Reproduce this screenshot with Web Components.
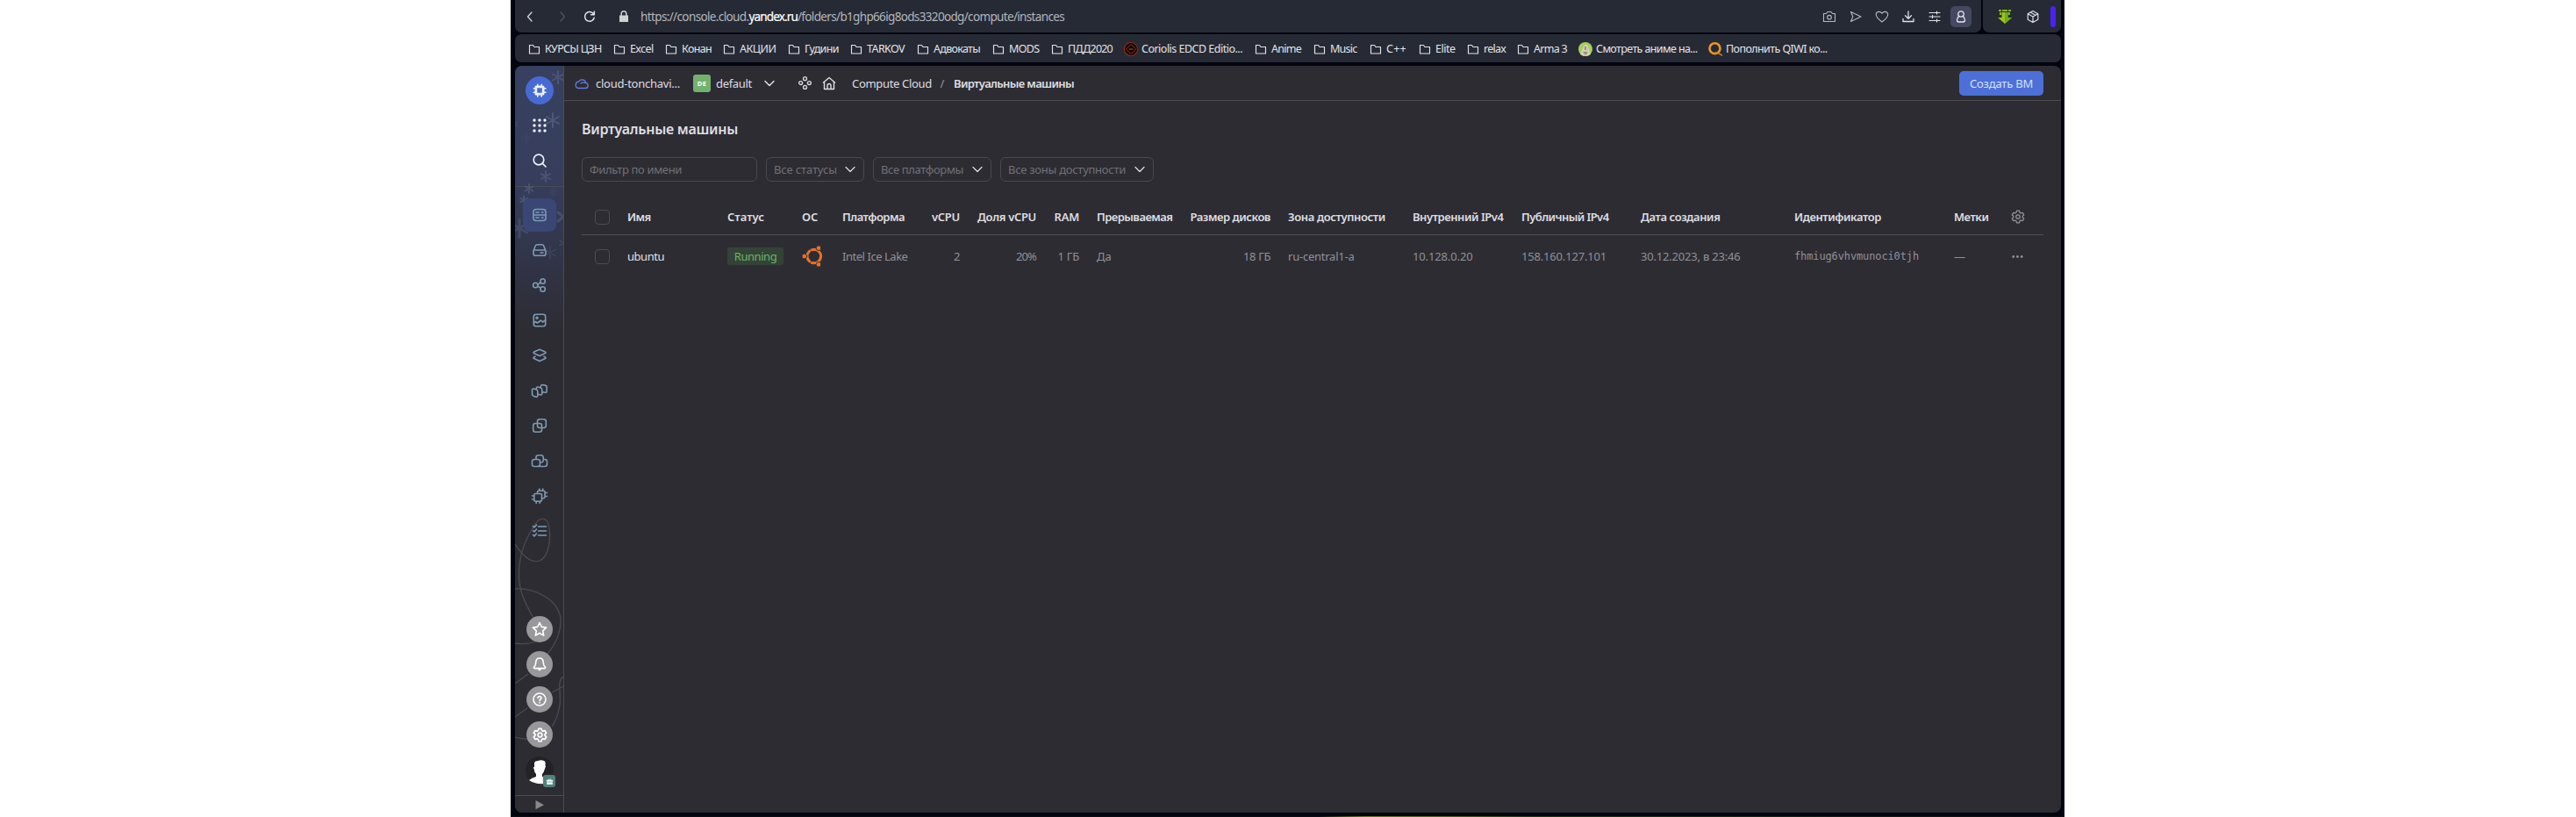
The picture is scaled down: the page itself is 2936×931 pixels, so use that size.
<!DOCTYPE html>
<html lang="ru">
<head>
<meta charset="utf-8">
<title>Compute Cloud</title>
<style>
html,body{margin:0;height:100%;background:#fff;overflow:hidden}
body{display:flex;padding-left:582px;box-sizing:border-box;font-family:"Noto Sans","Open Sans",sans-serif;font-size:13px;color:#dfdfe1}
</style>
</head>
<body>
<browser-window></browser-window>
<script>
const labels = [];
const define = (name, html, ready) => customElements.define(name, class extends HTMLElement {
  constructor() { super(); this.attachShadow({mode: 'open'}); }
  connectedCallback() {
    this.shadowRoot.innerHTML = typeof html === 'function' ? html(this) : html;
    if (ready) ready(this);
  }
});

// Text label tracked to a given advance width.
define('x-t', '<style>:host{display:block;white-space:pre;line-height:20px;flex:none}</style><slot></slot>', el => labels.push(el));

const gear = '<path d="M6.500 1.200h3l.5 2 1.200.7 2-.6 1.500 2.600-1.500 1.400v1.400l1.500 1.400-1.500 2.600-2-.6-1.200.7-.5 2h-3l-.5-2-1.200-.7-2 .6-1.500-2.600 1.500-1.400V7.300l-1.500-1.400 1.500-2.600 2 .6L6 3.200z"/><circle cx="8" cy="8" r="2.200"/>';
const icons = {
  back: '<path d="M10 3 5.500 8l4.500 5"/>', fwd: '<path d="M6 3l4.500 5L6 13"/>',
  reload: '<path d="M13.200 9.200A5.400 5.400 0 1 1 12.400 4.800M13.300 2v3.700H9.600"/>',
  lock: '<path d="M5.200 7V4.600a2.800 2.800 0 0 1 5.600 0V7"/><path fill="currentColor" stroke="none" d="M3 6.500h10v7.500H3z"/>',
  folder: '<path d="M2.500 3.500h4l1.500 2h5.500v7.500h-11z"/>',
  camera: '<path d="M1.500 4.500h3L6 2.500h4l1.500 2h3v9h-13z"/><circle cx="8" cy="8.700" r="2.300"/>',
  send: '<path d="M2.500 2.500 14 8 2.500 13.500 4.800 8z"/>',
  heart: '<path d="M8 14C3.500 10.500 1.300 8.300 1.300 5.700 1.300 1.800 6.200 1.300 8 4.300c1.800-3 6.700-2.500 6.700 1.400 0 2.600-2.200 4.800-6.700 8.300z"/>',
  down: '<path d="M8 2v8M4.500 6.800 8 10.200l3.500-3.400M2 10.500v3h12v-3"/>',
  sliders: '<path d="M2 3.500h12M2 8h12M2 12.500h12M10.500 2v3M5.500 6.500v3M10.500 11v3"/>',
  person: '<circle cx="8" cy="5" r="3.200"/><path d="M5.600 7.500C4 9 3.500 10 3.500 12c0 1.500.8 2 2 2h5c1.200 0 2-.5 2-2 0-2-.5-3-2.100-4.500"/>',
  cube: '<path d="m8 1.500 5.800 3.200v6.600L8 14.500l-5.800-3.200V4.700zM2.200 4.700 8 8l5.800-3.300M8 8v6.500M5 3l6 3.300"/>',
  arrow: '<g stroke="none"><path fill="#9dc31b" d="M4.500 3h7v6H16l-8 7-8-7h4.500z"/><path fill="#6cab1d" d="M8 3h3.500v6H16l-8 7z"/><path fill="#82b718" d="M1 0h3v2H1zM5 0h6v2H5zM12 0h3v2h-3zM2 3h2v3H2zM12 3h2v3h-2z"/></g>',
  chev: '<path d="m3 5.500 5 5 5-5"/>',
  cloud: '<path d="M4.300 13.500h7.900a3 3 0 0 0 .7-5.900A4.600 4.600 0 0 0 4.500 6 3.800 3.800 0 0 0 4.300 13.500zM7 8.200c1-1.500 3.800-1.600 5.900-.6"/>',
  nodes: '<circle cx="8" cy="2.800" r="2.100"/><circle cx="2.800" cy="8" r="2.100"/><circle cx="13.200" cy="8" r="2.100"/><circle cx="8" cy="13.200" r="2.100"/>',
  home: '<path d="M1.500 7 8 1.500 14.500 7M2.500 6.500V14.500h11V6.500M6 14.300V10.500a2 2 0 0 1 4 0v3.800"/>',
  grid: '<g fill="currentColor" stroke="none">' + [2, 8, 14].map(y => [2, 8, 14].map(x => `<circle cx="${x}" cy="${y}" r="1.700"/>`).join('')).join('') + '</g>',
  search: '<circle cx="7" cy="7" r="5.800"/><path d="m11.200 11.200 3.800 3.800"/>',
  chip: '<path fill="currentColor" stroke="none" fill-rule="evenodd" d="M4 2.500h8A1.500 1.500 0 0 1 13.500 4v8a1.500 1.500 0 0 1-1.500 1.500H4A1.500 1.500 0 0 1 2.500 12V4A1.500 1.500 0 0 1 4 2.500zM5.200 5.200v5.600h5.600V5.200z"/><path d="M5.800 1.200v2M10.200 1.200v2M5.800 13v2M10.200 13v2M1.200 5.800h2M1.200 10.200h2M13 5.800h2M13 10.200h2"/>',
  server: '<rect x="1" y="1.500" width="14" height="13" rx="3"/><path d="M1 8h14M4 5h3M4 11h3M10.500 5h1.500M10.500 11h1.500"/>',
  disk: '<path d="M1 9v3a2.300 2.300 0 0 0 2.300 2.300h9.400A2.300 2.300 0 0 0 15 12V9L12.800 3.300A2.500 2.500 0 0 0 10.500 1.700h-5A2.500 2.500 0 0 0 3.200 3.300zM1.500 8h13M9 11h3"/>',
  share: '<circle cx="3.300" cy="8" r="2.700"/><circle cx="11.600" cy="3.500" r="2.700"/><circle cx="11.600" cy="12.500" r="2.700"/><path d="M6 7 9.200 5M6 9.200l3.200 1.900"/>',
  image: '<rect x="1.300" y="1.300" width="13.400" height="13.400" rx="2.500"/><circle cx="5" cy="5.300" r="1"/><path d="m1.500 11 2-1.500 2 1.500L9.500 8l2 2 3-2"/>',
  layers: '<path d="M8 1.200 14.500 4q1 .8 0 1.600L8 8.500 1.500 5.600q-1-.8 0-1.600zM3 9.200l-1.500.8q-1 .8 0 1.600L8 14.600l6.500-3q1-.8 0-1.600L13 9.200"/>',
  group: '<path d="M-.5 7.500Q-.5 5.800 1 6l3 .8Q5.800 7.200 5.800 9v4.500Q5.600 16 3.800 15.300L1 14.200Q-.5 13.500-.5 12zM4.300 6.500Q4.300 3.700 5.800 4l3 .8Q10.800 5.200 10.800 7v4.500Q10.800 13 9.300 13L6.500 12.300M9.300 4.500Q9.300 1.300 11 1.500l3.500.6Q16.300 2.500 16.200 4v4.500q0 2-1.700 1.800l-3-.5"/>',
  squares: '<rect x=".7" y="5.500" width="9.800" height="9.800" rx="2.500"/><rect x="5.500" y=".7" width="9.800" height="9.800" rx="2.500"/>',
  cubes: '<rect x="-.5" y="6.500" width="9" height="8" rx="2.500"/><path d="M4 6.500V4.200A2.500 2.500 0 0 1 6.500 1.700h3.200a2.500 2.500 0 0 1 2.500 2.500v2.300h1.800A2.500 2.500 0 0 1 16.500 9v3a2.500 2.500 0 0 1-2.500 2.500H6.500M12.200 6.500v1A2.500 2.500 0 0 1 9.700 10H8.500"/>',
  chips: '<rect x="1.800" y="5.500" width="8.700" height="8.700" rx="1.500"/><path d="M5.500 5.500V3.700A1.500 1.500 0 0 1 7 2.200h5.500A1.500 1.500 0 0 1 14 3.700v5.500a1.500 1.500 0 0 1-1.500 1.500h-2M7.700 0v2M11.700 0v2M14 4.500h2.500M14 8.500h2.500M-.5 8h2M-.5 12h2M4.200 14.300v2.200M8.200 14.300v2.200"/>',
  tasks: '<path d="M6.500 3h9M6.500 8h9M6.500 13h9M.5 2.500 2 4 4.500 1M.5 7.500 2 9l2.500-3M.5 12.500 2 14l2.500-3"/>',
  star: '<path d="m8 .5 2.300 4.900 5.300.7-3.900 3.700 1 5.300L8 12.500l-4.700 2.600 1-5.300L.4 6.100l5.300-.7z"/>',
  bell: '<path d="M8 1C5 1 3.800 3.300 3.700 6c0 3-.4 3.800-2 5-.6.800-.4 1.600.6 1.600h11.400c1 0 1.200-.8.6-1.600-1.600-1.200-2-2-2-5C12.200 3.300 11 1 8 1zM6.500 13q1.500 3.200 3 0"/>',
  help: '<circle cx="8" cy="8" r="7"/><path d="M6 6.500c0-2.800 4.200-2.500 4 0C9.900 7.800 8 7.800 8 9.500M8 11.500v.5"/>',
  gear,
  play: '<path fill="currentColor" stroke="none" d="M3.500 3v10.300L13 8.200z"/>',
  case: '<path fill="currentColor" stroke="none" d="M5 3h6v2h3.500v3.500h-13V5H5zm1.500 1v1h3V4zM2 9.500h12V14H2z"/>',
  dots: '<g fill="currentColor" stroke="none"><circle cx="2.200" cy="8" r="1.700"/><circle cx="8" cy="8" r="1.700"/><circle cx="13.800" cy="8" r="1.700"/></g>',
  ubuntu: '<g stroke="#e9722b"><circle cx="9.200" cy="8" r="5.200" stroke-width="2"/><g fill="#e9722b" stroke="#2d2c33" stroke-width=".6"><circle cx="1.900" cy="8" r="1.900"/><circle cx="12.700" cy="1.800" r="1.900"/><circle cx="12.700" cy="14.200" r="1.900"/></g><path stroke="#2d2c33" stroke-width=".4" d="m6 2.300 1.300 2.300M6 13.700l1.300-2.300"/></g>',
  coriolis: '<circle cx="8" cy="8" r="7.500" fill="#160806" stroke="#8e2d12" stroke-dasharray="2 1"/><path d="m8 2.500 5.500 5.500L8 13.500 2.500 8z" fill="#0b0303" stroke="#63200f"/><path d="M6 8h4" stroke="#c65a27"/>',
  anime: '<circle cx="8" cy="8" r="8" fill="#a4cf5d" stroke="none"/><path d="M2 14 5 7l2-4h3l2 5 2 6q-6 4-12 0z" fill="#d5cfb4" stroke="none"/><path d="M7 5h2v4H7zM5 11l3 4 3-4z" fill="#a08e79" stroke="none"/>',
  qiwi: '<circle cx="7.500" cy="7.200" r="6" stroke="#eb9820" stroke-width="2.600"/><path d="M8 12q4 0 7.500 3" stroke="#d9821c" stroke-width="1.500"/>'
};
define('ui-icon', el => {
  const s = el.getAttribute('size') || 16, w = el.getAttribute('stroke') || 1.4;
  return `<style>:host{display:block;flex:none;width:${s}px;height:${s}px}svg{display:block;overflow:visible}</style>
  <svg width="${s}" height="${s}" viewBox="0 0 16 16" fill="none" stroke="currentColor" stroke-width="${w}" stroke-linejoin="round" stroke-linecap="round">${icons[el.getAttribute('name')]}</svg>`;
});

define('browser-window', `<style>
:host{display:grid;flex:none;grid-template-rows:37px 32px 853px 1px;row-gap:2px;box-sizing:border-box;width:1771px;height:931px;padding:0 4px 0 5px;background:#02040f;align-content:start}
console-app{margin-top:2px}
:host::after{content:"";height:1px;margin:0 -4px 0 -5px;background:linear-gradient(90deg,#080e13 52%,#24330f 53%,#66761d 55%,#51621c 60%,#203615 66%,#080e13);margin-top:2px}
</style><address-bar></address-bar><bookmarks-bar></bookmarks-bar><console-app></console-app>`);

define('address-bar', `<style>
:host{display:flex;gap:2px;color:#b4b6bc}
div{display:flex;align-items:center;box-sizing:border-box;background:#262a35}
.m{width:1671px;border-radius:0 0 7px 7px;padding-left:9px}
.s{flex:1;border-radius:0 0 7px 7px;padding-left:17px}
.u{background:none;padding-left:11px;flex:1;font-size:13.500px}
.p{width:24px;height:24px;border-radius:5px;background:#454862;justify-content:center;color:#e6e7ec;margin-left:10px}
ui-icon+ui-icon{margin-left:14px}
i{width:6px;height:24px;border-radius:3px;background:#4b21f5;margin-left:12px}
</style>
<div class="m"><ui-icon name="back" stroke="1.300" style="color:#d4d6da"></ui-icon><ui-icon name="fwd" stroke="1.300" style="color:#50545e;margin-left:21px"></ui-icon><ui-icon name="reload" stroke="1.500" style="color:#e2e3e6;margin-left:15px"></ui-icon><ui-icon name="lock" stroke="1.500" style="color:#cfd1d4;margin-left:23px"></ui-icon>
<div class="u"><x-t w="123.500">https://console.cloud.</x-t><x-t w="55.500" style="color:#fff;-webkit-text-stroke:.2px #fff">yandex.ru</x-t><x-t w="304">/folders/b1ghp66ig8ods3320odg/compute/instances</x-t></div>
<ui-icon name="camera" stroke="1.100"></ui-icon><ui-icon name="send" stroke="1.100"></ui-icon><ui-icon name="heart" stroke="1.100"></ui-icon><ui-icon name="down" stroke="1.300" style="color:#e0e1e5"></ui-icon><ui-icon name="sliders" stroke="1.200" style="color:#e0e1e5"></ui-icon><div class="p" style="margin-right:11px"><ui-icon name="person" stroke="1.300"></ui-icon></div></div>
<div class="s"><ui-icon name="arrow"></ui-icon><ui-icon name="cube" stroke="1.200" style="color:#dcdde2;margin-left:16px"></ui-icon><i></i></div>`);

const marks = [['КУРСЫ ЦЗН',603,64.5],['Excel',700,26.5],['Конан',759,34],['АКЦИИ',825,41.5],['Гудини',899,39],['TARKOV',970,43],['Адвокаты',1046,53],['MODS',1132,34.5],['ПДД2020',1199,51],['Coriolis EDCD Editio...',1281,115,'coriolis'],['Anime',1431,34],['Music',1498,30.5],['C++',1562,23],['Elite',1618,22.5],['relax',1673,25],['Arma 3',1730,38],['Смотреть аниме на...',1799,115.5,'anime'],['Пополнить QIWI ко...',1947,115.5,'qiwi']];
define('book-mark', el => `<style>:host{display:flex;align-items:center;font-size:12.500px;color:#e3e4e7}ui-icon{margin:0 4px 0 ${el.getAttribute('icon') === 'folder' ? '-2px' : '0'}}</style><ui-icon name="${el.getAttribute('icon')}" stroke="1.150"></ui-icon><slot></slot>`);
define('bookmarks-bar', `<style>:host{display:flex;background:#262a35;border-radius:7px;padding:2px 0 0 16px}</style>` +
  marks.map((m, i) => `<book-mark icon="${m[3] || 'folder'}" style="width:${(marks[i + 1] || [0, 2100])[1] - m[1]}px"><x-t w="${m[2]}">${m[0]}</x-t></book-mark>`).join(''));

define('console-app', `<style>:host{display:grid;grid-template-columns:56px 1fr;background:#2d2c33;border-radius:8px;overflow:hidden;height:851px}</style><side-nav></side-nav><main-pane></main-pane>`);

const flake = (x, y, r, o) => `<path opacity="${o}" stroke-width="${r > 9 ? 3 : 2}" d="M${x} ${y - r}v${2 * r}M${x - r * .87} ${y - r / 2}l${r * 1.73} ${r}M${x - r * .87} ${y + r / 2}l${r * 1.73} ${-r}"/>`;
define('side-nav', `<style>
:host{display:flex;flex-direction:column;align-items:center;position:relative;box-sizing:border-box;border-right:1px solid #4b4b52;background:linear-gradient(#37405f 0,#363e5c 130px,#333850 190px,#2d2c33 300px);color:#7c9bb4}
.bg{position:absolute;inset:0}
.b{position:relative;flex:none;display:grid;place-items:center;width:38px;height:38px;margin-bottom:2px;border-radius:8px;margin-left:1px}
.top{color:#edf0f7}
.on{background:#3a4775}
.logo{width:32px;height:32px;border-radius:50%;background:#476bd3;margin:12px 0 5px 1px}
hr{width:100%;height:1px;border:0;margin:0;background:#4b4b55;flex:none}
.c{width:30px;height:30px;border-radius:50%;background:#98989b;color:#fff;margin-bottom:10px}
.av{width:32px;height:32px;border-radius:50%;background:#222227;margin-bottom:0}
.bd{position:absolute;right:-2px;bottom:-3px;width:14px;height:14px;border-radius:3px;background:#52807b;display:grid;place-items:center;color:#e8f4f2}
</style>
<svg class="bg" width="55" height="851" viewBox="587 75 55 851" fill="none" stroke="#4b4a50" stroke-width="1.300"><g stroke="#5a6383" stroke-linecap="round">${flake(636,88,7,.6)}${flake(630,137,8,.7)}${flake(622,201,6,.6)}${flake(603,215,5,.6)}${flake(597,228,4.500,.6)}${flake(592,260,10,.4)}${flake(627,288,7,.25)}${flake(586,141,4,.3)}${flake(600,158,5,.12)}${flake(631,219,5,.15)}<path opacity=".5" stroke-width="3" d="m636 242 6 5-6 5"/><path opacity=".3" stroke-width="2" d="m638 274 4 3-4 3"/></g>
<path d="M587 620C597 635 606 642 615 639 625 635 628 616 626 602 624 587 614 588 607 602 591 627 588 655 595 677 599 689 604 697 609 706M587 671C612 670 636 684 639 705 640 720 632 736 624 745M602 768 587 779M587 733Q599 735 611 731M587 817 601 807M629 789 642 782M642 771C634 776 640 790 638 803Q636 818 629 828M587 840Q594 842 602 842"/></svg>
<div class="b logo top"><ui-icon name="chip" stroke="1.600"></ui-icon></div>
<div class="b top"><ui-icon name="grid" size="16"></ui-icon></div>
<div class="b top"><ui-icon name="search" size="16" stroke="1.700"></ui-icon></div>
<hr style="margin:8px 0 13px">
<div class="b on"><ui-icon name="server" stroke="1.600"></ui-icon></div>
${['disk','share','image','layers','group','squares','cubes','chips','tasks'].map(n => `<div class="b"><ui-icon name="${n}" size="16" stroke="1.600"></ui-icon></div>`).join('')}
<div style="flex:1"></div>
${['star','bell','help','gear'].map(n => `<div class="b c"><ui-icon name="${n}" size="${n === 'gear' ? 17 : 16}" stroke="1.600"></ui-icon></div>`).join('')}
<div class="b av"><svg width="32" height="32" viewBox="0 0 32 32" fill="#fff"><path d="M10 8q0-3 4-3 4-1.500 8 .5 1 1 .5 4.500 1 1-.5 4-1 4-3 6v3l3 1v7q-12 1-18-4 3-2.500 8-4v-3q-2-2-2.500-6Q8 12 10 12z"/></svg><div class="bd"><ui-icon name="case" size="9"></ui-icon></div></div>
<hr style="margin-top:12px"><div class="b" style="height:19px;margin:0;color:#88888d"><ui-icon name="play"></ui-icon></div>`);

define('main-pane', `<style>:host{display:block}
header{display:flex;align-items:center;height:39px;border-bottom:1px solid #4b4b50;padding:0 20px 0 12px}
.de{display:grid;place-items:center;width:20px;height:20px;border-radius:3px;background:#73b16e;color:#fff;font-weight:700;font-size:7.500px;margin:0 6px 0 15px}
.btn{display:grid;place-items:center;width:96px;height:28px;border-radius:5px;background:#4c70d8;margin-left:auto;color:#d6e0f9}
h1{margin:22px 0 0 20px;font-size:16px;font-weight:600;height:20px}
.f{display:flex;gap:10px;margin:22px 0 0 20px;color:#717175}
.f div{display:flex;align-items:center;justify-content:space-between;box-sizing:border-box;height:28px;border:1px solid #4a494f;border-radius:6px;padding:0 7px 0 8px}
.f ui-icon{color:#e0e0e2}
vm-table{margin:20px 20px 0}
</style>
<header><ui-icon name="cloud" stroke="1.300" style="color:#5d7ee0"></ui-icon><x-t w="96" style="margin-left:8px">cloud-tonchavi...</x-t><div class="de"><x-t w="10.500">DE</x-t></div><x-t w="41">default</x-t><ui-icon name="chev" stroke="1.500" style="margin:0 25px 0 12px"></ui-icon><ui-icon name="nodes" size="15"></ui-icon><ui-icon name="home" style="margin:0 18px 0 12px"></ui-icon><x-t w="91">Compute Cloud</x-t><x-t w="6" style="margin:0 9.500px;color:#98989c">/</x-t><x-t w="137" style="font-weight:600">Виртуальные машины</x-t><div class="btn"><x-t w="72">Создать ВМ</x-t></div></header>
<h1><x-t w="178">Виртуальные машины</x-t></h1>
<div class="f"><div style="width:200px"><x-t w="105">Фильтр по имени</x-t></div>
<div style="width:112px"><x-t w="72">Все статусы</x-t><ui-icon name="chev" stroke="1.200"></ui-icon></div><div style="width:135px"><x-t w="94">Все платформы</x-t><ui-icon name="chev" stroke="1.200"></ui-icon></div><div style="width:175px"><x-t w="134">Все зоны доступности</x-t><ui-icon name="chev" stroke="1.200"></ui-icon></div></div>
<vm-table></vm-table>`);

define('vm-row', `<style>:host{display:grid;grid-template-columns:52px 114px 85px 46px 80px 54px 87px 49px 126px 92px 162px 124px 136px 175px 182px 66px 36px;align-items:center}</style><slot></slot>`);
const cls = i => [5, 6, 7, 9].includes(i) ? 'r' : [8, 10].includes(i) ? 'l' : '';
const cells = a => a.map((c, i) => `<div class="${cls(i)}">${Array.isArray(c) ? `<x-t w="${c[1]}" style="${c[2] || ''}">${c[0]}</x-t>` : c}</div>`).join('');
define('vm-table', `<style>:host{display:block;margin-left:20px}
.h{height:40px;border-bottom:1px solid #504f55;font-weight:600;color:#dedee0}
.d{height:48px;color:#919196}
.r{display:flex;justify-content:flex-end}.l{padding-left:20px}
i{display:block;box-sizing:border-box;width:17px;height:17px;border:1px solid #4d4c52;border-radius:4px;margin-left:15px}
.st{display:grid;place-items:center;width:64px;height:20px;border-radius:2px;background:#354238;color:#67b665}
</style>
<vm-row class="h">${cells(['<i></i>',['Имя',26.5],['Статус',42],['ОС',18.5],['Платформа',71],['vCPU',32],['Доля vCPU',67],['RAM',28.5],['Прерываемая',86.5],['Размер дисков',91.5],['Зона доступности',111],['Внутренний IPv4',103.5],['Публичный IPv4',99.5],['Дата создания',90.5],['Идентификатор',99],['Метки',39.5],'<ui-icon name="gear" stroke="1.300" style="color:#929296;margin-left:-1px"></ui-icon>'])}</vm-row>
<vm-row class="d">${cells(['<i></i>',['ubuntu',42,'color:#e0e0e2'],'<div class="st"><x-t w="48.500">Running</x-t></div>','<ui-icon name="ubuntu" size="24"></ui-icon>',['Intel Ice Lake',74.5],['2',7],['20%',23],['1 ГБ',24.5],['Да',17],['18 ГБ',31],['ru-central1-a',75.5],['10.128.0.20',68.5],['158.160.127.101',97],['30.12.2023, в 23:46',113.5],['fhmiug6vhvmunoci0tjh',142,'font:12px/20px \'DejaVu Sans Mono\',monospace'],['—',11],'<ui-icon name="dots" size="13"></ui-icon>'])}</vm-row>`);

for (const el of labels) {
  const target = +el.getAttribute('w');
  el.style.width = 'max-content';
  const natural = el.getBoundingClientRect().width;
  el.style.letterSpacing = (target - natural) / el.textContent.length + 'px';
  el.style.width = target + 'px';
}
</script>
</body>
</html>
